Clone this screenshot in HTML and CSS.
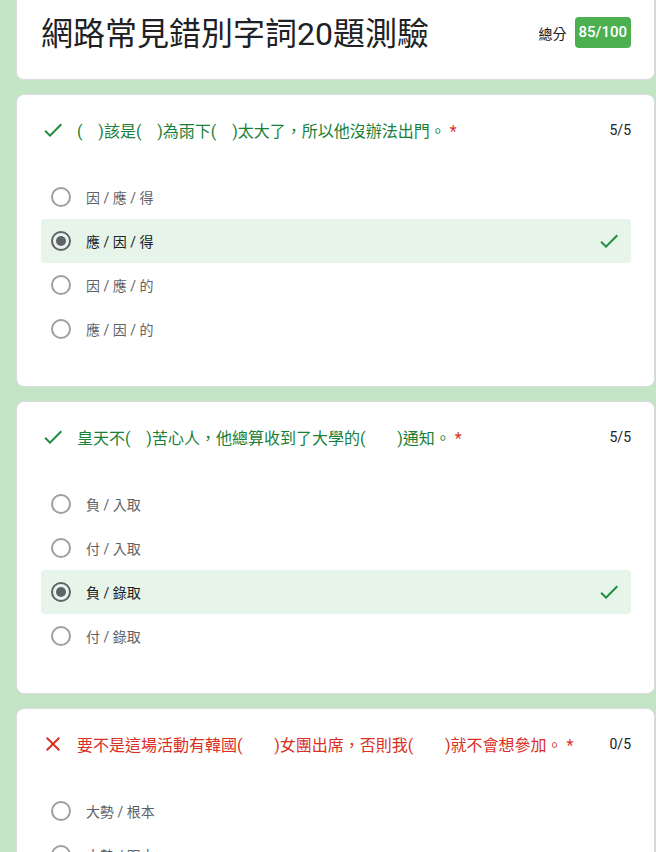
FILE: index.html
```html
<!DOCTYPE html>
<html lang="zh-Hant">
<head>
<meta charset="utf-8">
<title>網路常見錯別字詞20題測驗</title>
<link rel="stylesheet" href="styles.css">
</head>
<body>
<div class="page">
  <div class="card header-card">
    <div class="header-row">
      <h1 class="title">網路常見錯別字詞20題測驗</h1>
      <div class="total">
        <span class="total-label">總分</span>
        <span class="badge">85/100</span>
      </div>
    </div>
  </div>

  <div class="card">
    <div class="q-row correct">
      <svg class="q-icon" viewBox="0 0 24 24"><path d="M9 16.17L4.83 12l-1.42 1.41L9 19 21 7l-1.41-1.41z"/></svg>
      <span class="q-text">(&nbsp;&nbsp;&nbsp;&nbsp;)該是(&nbsp;&nbsp;&nbsp;&nbsp;)為雨下(&nbsp;&nbsp;&nbsp;&nbsp;)太大了，所以他沒辦法出門。 <span class="req">*</span></span>
      <span class="score">5/5</span>
    </div>
    <div class="options">
      <div class="opt"><span class="radio"></span><span class="opt-text">因 / 應 / 得</span></div>
      <div class="opt selected good"><span class="radio"></span><span class="opt-text">應 / 因 / 得</span>
        <svg class="opt-check" viewBox="0 0 24 24"><path d="M9 16.17L4.83 12l-1.42 1.41L9 19 21 7l-1.41-1.41z"/></svg></div>
      <div class="opt"><span class="radio"></span><span class="opt-text">因 / 應 / 的</span></div>
      <div class="opt"><span class="radio"></span><span class="opt-text">應 / 因 / 的</span></div>
    </div>
  </div>

  <div class="card">
    <div class="q-row correct">
      <svg class="q-icon" viewBox="0 0 24 24"><path d="M9 16.17L4.83 12l-1.42 1.41L9 19 21 7l-1.41-1.41z"/></svg>
      <span class="q-text">皇天不(&nbsp;&nbsp;&nbsp;&nbsp;)苦心人，他總算收到了大學的(&nbsp;&nbsp;&nbsp;&nbsp;&nbsp;&nbsp;&nbsp;&nbsp;)通知。 <span class="req">*</span></span>
      <span class="score">5/5</span>
    </div>
    <div class="options">
      <div class="opt"><span class="radio"></span><span class="opt-text">負 / 入取</span></div>
      <div class="opt"><span class="radio"></span><span class="opt-text">付 / 入取</span></div>
      <div class="opt selected good"><span class="radio"></span><span class="opt-text">負 / 錄取</span>
        <svg class="opt-check" viewBox="0 0 24 24"><path d="M9 16.17L4.83 12l-1.42 1.41L9 19 21 7l-1.41-1.41z"/></svg></div>
      <div class="opt"><span class="radio"></span><span class="opt-text">付 / 錄取</span></div>
    </div>
  </div>

  <div class="card">
    <div class="q-row wrong">
      <svg class="q-icon" viewBox="0 0 24 24"><path d="M19 6.41L17.59 5 12 10.59 6.41 5 5 6.41 10.59 12 5 17.59 6.41 19 12 13.41 17.59 19 19 17.59 13.41 12z"/></svg>
      <span class="q-text">要不是這場活動有韓國(&nbsp;&nbsp;&nbsp;&nbsp;&nbsp;&nbsp;&nbsp;&nbsp;)女團出席，否則我(&nbsp;&nbsp;&nbsp;&nbsp;&nbsp;&nbsp;&nbsp;&nbsp;)就不會想參加。 <span class="req">*</span></span>
      <span class="score">0/5</span>
    </div>
    <div class="options">
      <div class="opt"><span class="radio"></span><span class="opt-text">大勢 / 根本</span></div>
      <div class="opt"><span class="radio"></span><span class="opt-text">大勢 / 跟本</span></div>
      <div class="opt"><span class="radio"></span><span class="opt-text">大事 / 根本</span></div>
      <div class="opt"><span class="radio"></span><span class="opt-text">大事 / 跟本</span></div>
    </div>
  </div>
</div>
</body>
</html>
```

FILE: styles.css
```css
html, body {
  margin: 0;
  padding: 0;
  overflow: hidden;
}
body {
  background: #c3e4c5;
  font-family: Roboto, "Noto Sans CJK TC", sans-serif;
  color: #202124;
}
.page {
  display: flex;
  flex-direction: column;
  gap: 14px;
  padding: 0 1px 0 16px;
}
.card {
  background: #fff;
  border: 1px solid #dadce0;
  border-radius: 8px;
  padding: 23px 23px 35px 24px;
}
.header-card {
  border-top: none;
  border-radius: 0 0 8px 8px;
  padding: 14px 23px 25px 24px;
}
.header-row {
  display: flex;
  align-items: center;
  justify-content: space-between;
  height: 40px;
}
.title {
  margin: 0;
  font-size: 32px;
  font-weight: 400;
  line-height: 40px;
  color: #202124;
}
.total {
  display: flex;
  align-items: center;
  gap: 8px;
  margin-top: -3px;
}
.total-label {
  font-size: 14px;
}
.badge {
  background: #4caf50;
  color: #fff;
  font-size: 15px;
  font-weight: 500;
  height: 31px;
  line-height: 31px;
  padding: 0 4px;
  border-radius: 4px;
}
.q-row {
  display: flex;
  align-items: center;
  height: 24px;
}
.q-icon {
  width: 24px;
  height: 24px;
  flex: none;
  margin-right: 12px;
}
.correct .q-icon { fill: #1e8e3e; }
.wrong .q-icon { fill: #d93025; }
.q-text {
  flex: 1;
  font-size: 16px;
  white-space: nowrap;
}
.correct .q-text { color: #188038; }
.wrong .q-text { color: #d93025; }
.req { color: #d93025; }
.score {
  font-size: 14px;
  color: #202124;
}
.options {
  margin-top: 33px;
  display: flex;
  flex-direction: column;
}
.opt {
  display: flex;
  align-items: center;
  height: 44px;
  padding: 0 10px;
  border-radius: 4px;
}
.radio {
  width: 16px;
  height: 16px;
  border: 2px solid #9aa0a6;
  border-radius: 50%;
  flex: none;
  margin-right: 15px;
  position: relative;
}
.opt-text {
  flex: 1;
  font-size: 14px;
  color: #5f6368;
}
.selected {
  background: #e6f4ea;
}
.selected .radio {
  border-color: #5f6368;
}
.selected .radio::after {
  content: "";
  position: absolute;
  left: 3px;
  top: 3px;
  width: 10px;
  height: 10px;
  border-radius: 50%;
  background: #5f6368;
}
.selected .opt-text {
  color: #202124;
}
.opt-check {
  width: 24px;
  height: 24px;
  fill: #1e8e3e;
  flex: none;
}
```
